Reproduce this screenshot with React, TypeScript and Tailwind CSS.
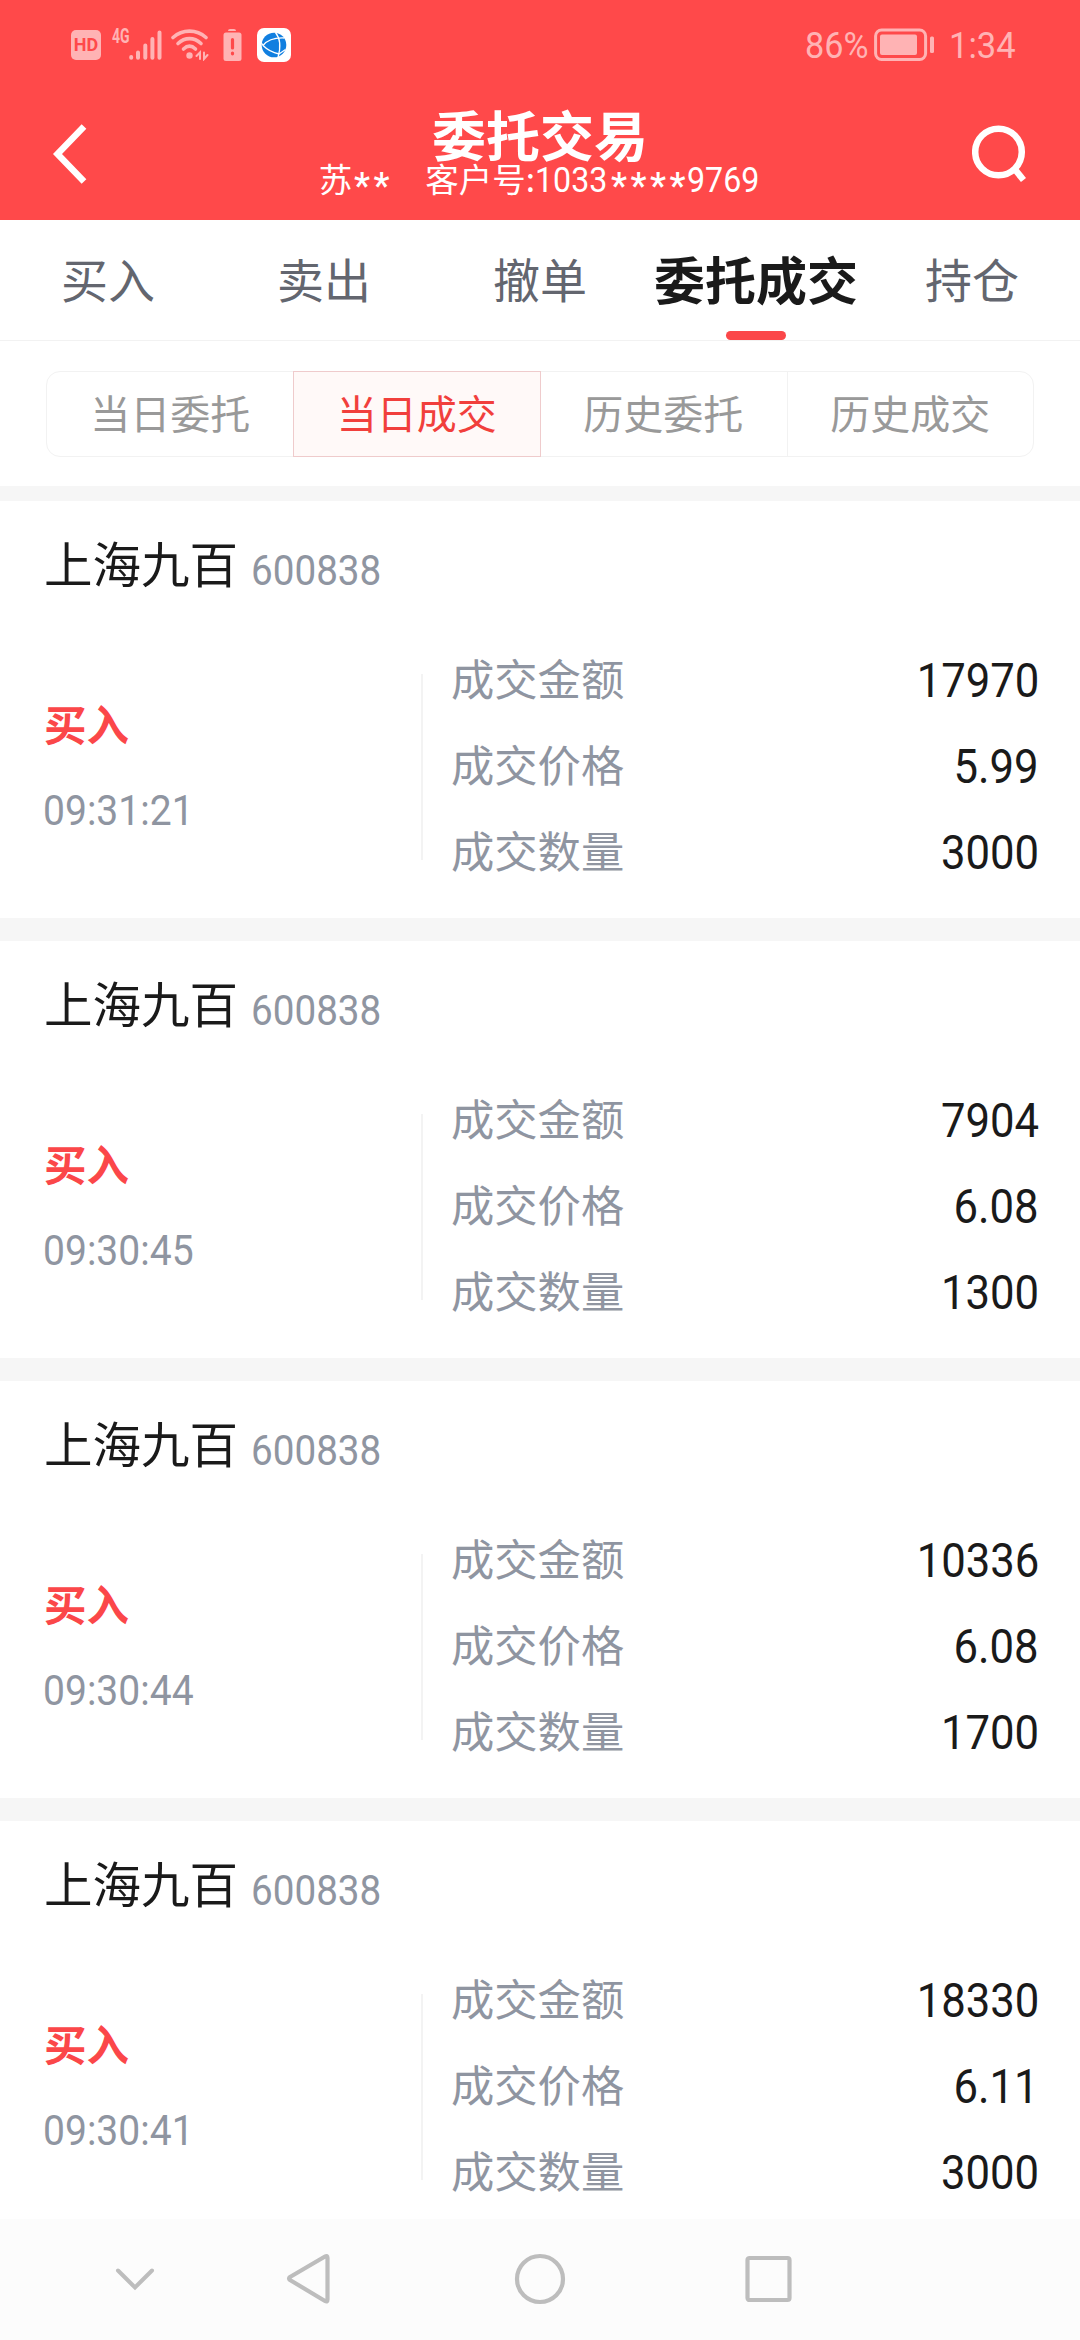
import clsx from 'clsx';

interface Deal {
  name: string;
  code: string;
  side: string;
  time: string;
  amount: string;
  price: string;
  quantity: string;
}

const TABS = ['买入', '卖出', '撤单', '委托成交', '持仓'];
const ACTIVE_TAB = '委托成交';

const FILTERS = ['当日委托', '当日成交', '历史委托', '历史成交'];
const ACTIVE_FILTER = '当日成交';

const DEALS: Deal[] = [
  { name: '上海九百', code: '600838', side: '买入', time: '09:31:21', amount: '17970', price: '5.99', quantity: '3000' },
  { name: '上海九百', code: '600838', side: '买入', time: '09:30:45', amount: '7904', price: '6.08', quantity: '1300' },
  { name: '上海九百', code: '600838', side: '买入', time: '09:30:44', amount: '10336', price: '6.08', quantity: '1700' },
  { name: '上海九百', code: '600838', side: '买入', time: '09:30:41', amount: '18330', price: '6.11', quantity: '3000' },
];

function SignalIcon() {
  return (
    <svg width="33" height="31" viewBox="0 0 33 31" stroke="currentColor" strokeWidth="4" strokeLinecap="round">
      <path d="M2.2 27v.8M9 22.500v5.300M16.300 15.500v12.300M23.400 9v18.800M30.500 2.500v25.300" />
    </svg>
  );
}

function WifiIcon() {
  return (
    <svg width="38" height="32" viewBox="0 0 38 32" fill="none" stroke="currentColor" strokeWidth="3.600" strokeLinecap="round">
      <path d="M2 8.500C11.500 0 25.500 0 35 8.500" />
      <path d="M7 14.500C14 8 23 8 30 14.500" />
      <path d="M12.500 20C16.500 16.200 20.500 16.200 24.500 20" />
      <circle cx="18.500" cy="26.500" r="3.200" fill="currentColor" stroke="none" />
      <path d="M25.500 27l3.500-3.500v6.500M33 23.500v6.500l3.500-4" strokeWidth="2" />
    </svg>
  );
}

function BatteryAlertIcon() {
  return (
    <svg width="19" height="32" viewBox="0 0 19 32">
      <path d="M5 2Q5 0 7 0h4q2 0 2 2H5z" fill="currentColor" />
      <rect x="0.500" y="3.500" width="18" height="28.500" rx="2.500" fill="currentColor" />
      <path d="M9.500 10.500v8.500M9.500 24v.8" stroke="#ff494a" strokeWidth="3.200" strokeLinecap="round" />
    </svg>
  );
}

function BrowserIcon() {
  return (
    <svg width="34" height="34" viewBox="0 0 34 34">
      <rect width="34" height="34" rx="7" fill="#fff" />
      <circle cx="17" cy="17" r="12.300" fill="#117fe0" />
      <g fill="none" stroke="#fff" strokeWidth="1.300">
        <path d="M6 17.500C10 12.500 17 9.500 27.500 10" />
        <path d="M6 17.500C10 21.500 15 24.500 22 26" />
        <path d="M18.500 4.500C23 10 24 19 21 29.500" />
        <path d="M6 17.500L4.500 15M22 26L28.500 21.500" />
      </g>
    </svg>
  );
}

function BatteryIcon() {
  return (
    <svg width="61" height="34" viewBox="0 0 61 34">
      <rect x="1.600" y="2" width="50" height="29.500" rx="6" fill="none" stroke="currentColor" strokeWidth="3" />
      <rect x="6" y="6.500" width="37" height="20.500" rx="2" fill="currentColor" />
      <rect x="56" y="8.500" width="4" height="16.500" rx="1.500" fill="currentColor" />
    </svg>
  );
}

function StatusBar() {
  return (
    <div className="flex h-[90px] items-center justify-between pl-[71px] pr-[66px] text-[#ffb3b4]">
      <div className="flex items-center">
        <span className="flex h-[30px] w-[30px] items-center justify-center rounded-[5px] bg-[#ffb3b4] font-['Roboto',sans-serif] text-[18px] font-bold leading-none text-[#ff494a]">
          HD
        </span>
        <span className="mb-[19px] ml-[11px] w-[17px] origin-left scale-x-[.7] font-['Roboto',sans-serif] text-[20px] font-bold leading-none">
          4G
        </span>
        <SignalIcon />
        <span className="ml-[9px]">
          <WifiIcon />
        </span>
        <span className="ml-[14px]">
          <BatteryAlertIcon />
        </span>
        <span className="ml-[15px]">
          <BrowserIcon />
        </span>
      </div>
      <div className="flex items-center font-['Roboto',sans-serif] text-[36px] leading-[36px]">
        <span className="w-[69px] origin-left scale-x-[.95] pt-[2px]">86%</span>
        <BatteryIcon />
        <span className="ml-[14px] w-[65px] origin-left scale-x-[.96] pt-[2px]">1:34</span>
      </div>
    </div>
  );
}

// Masked digits sit on the middle of the line rather than at cap height
function Mask({ count }: { count: number }) {
  return (
    <span className="flex pt-[14px]">
      {Array.from({ length: count }, (_, i) => (
        <span key={i} className="w-[19.5px] text-center font-['Roboto',sans-serif] text-[36px] font-medium">
          *
        </span>
      ))}
    </span>
  );
}

function TitleBar() {
  return (
    <div className="flex h-[130px] items-start justify-between pl-[52px] pr-[52px] text-white">
      <svg className="mt-[34px]" width="56" height="60" viewBox="0 0 56 60" fill="none" stroke="currentColor" strokeWidth="6.500">
        <path d="M32 2.500L5.500 30L32 57.500" />
      </svg>
      <div className="flex flex-col items-center">
        <h1 className="mt-[17px] text-[54px] font-bold leading-[54px]">委托交易</h1>
        <div className="flex h-[36px] items-center whitespace-nowrap text-[33.500px] leading-[36px]">
          <span className="pb-[2px]">苏</span>
          <Mask count={2} />
          <span className="ml-[34px] pb-[2px]">客户号:</span>
          <span className="w-[74px] origin-left scale-x-[.92] pt-[3px] font-['Roboto',sans-serif] text-[35px]">1033</span>
          <Mask count={4} />
          <span className="w-[74px] origin-left scale-x-[.92] pt-[3px] font-['Roboto',sans-serif] text-[35px]">9769</span>
        </div>
      </div>
      <svg className="mt-[34px]" width="56" height="60" viewBox="0 0 56 60" fill="none" stroke="currentColor" strokeWidth="6.500">
        <circle cx="26.500" cy="28" r="23.300" />
        <path d="M43 45.500L51.500 56" />
      </svg>
    </div>
  );
}

function TabBar() {
  return (
    <nav className="grid h-[121px] grid-cols-5 border-b border-[#f2f2f2] text-[47px] text-[#63666f]">
      {TABS.map((tab) => {
        const active = tab === ACTIVE_TAB;
        return (
          <div key={tab} className="relative flex h-[120px] items-center justify-center whitespace-nowrap pb-[3px]">
            <span className={clsx(active && 'text-[51px] font-bold text-[#1a1a1a]')}>{tab}</span>
            {active && <span className="absolute bottom-0 h-[9px] w-[60px] rounded-full bg-[#fb4749]" />}
          </div>
        );
      })}
    </nav>
  );
}

function FilterBar() {
  return (
    <div className="h-[145px] px-[46px] pt-[30px]">
      <div className="grid h-[86px] grid-cols-4 rounded-[14px] border border-[#f2f2f2] text-[40px] text-[#999]">
        {FILTERS.map((filter, i) => (
          <div
            key={filter}
            className={clsx(
              'flex items-center justify-center pb-[5px]',
              filter === ACTIVE_FILTER && '-m-px border border-[#efcbcc] bg-[#fff9f8] text-[#f13f3c]',
              i === 3 && 'border-l border-[#f2f2f2]',
            )}
          >
            {filter}
          </div>
        ))}
      </div>
    </div>
  );
}

function DealRow({ label, value }: { label: string; value: string }) {
  return (
    <div className="flex h-[86px] items-center justify-between">
      <span className="pb-[3px] text-[43.300px] leading-[83px] text-[#8f95a1]">{label}</span>
      <span className="origin-right scale-x-[.9] pt-[3px] font-['Roboto',sans-serif] text-[48.500px] leading-[81px] text-[#1a1a1a]">
        {value}
      </span>
    </div>
  );
}

function DealCard({ deal }: { deal: Deal }) {
  return (
    <article className="h-[440px] shrink-0 border-b-[23px] border-[#f6f6f6] bg-white pl-[44px] pr-[41px]">
      <header className="flex h-[135px] items-center whitespace-nowrap pb-[12px]">
        <span className="text-[48.500px] text-[#1a1a1a]">{deal.name}</span>
        <span className="ml-[13px] mt-[16px] origin-left scale-x-[.92] font-['Roboto',sans-serif] text-[42px] text-[#8f95a1]">
          {deal.code}
        </span>
      </header>
      <div className="flex">
        <div className="flex h-[260px] w-[377px] flex-col pt-[57px]">
          <span className="text-[42.500px] font-bold leading-[60px] text-[#fb4749]">{deal.side}</span>
          <span className="-ml-px mt-[28px] origin-left scale-x-[.93] font-['Roboto',sans-serif] text-[42px] leading-[60px] text-[#8f95a1]">
            {deal.time}
          </span>
        </div>
        <div className="mt-[38px] h-[186px] w-[2px] bg-[#f3f3f3]" />
        <div className="ml-[28px] flex-1">
          <DealRow label="成交金额" value={deal.amount} />
          <DealRow label="成交价格" value={deal.price} />
          <DealRow label="成交数量" value={deal.quantity} />
        </div>
      </div>
    </article>
  );
}

function SystemNav() {
  return (
    <div className="flex h-[121px] shrink-0 items-center bg-[#fcfcfc] pb-[2px] pl-[115px] text-[#bdbdbd]">
      <svg width="40" height="24" viewBox="0 0 40 24" fill="none" stroke="currentColor" strokeWidth="4" strokeLinecap="round">
        <path d="M3 3.500L20 20.500L37 3.500" />
      </svg>
      <svg className="ml-[131px]" width="46" height="52" viewBox="0 0 46 52" fill="none" stroke="currentColor" strokeWidth="4.200" strokeLinejoin="round">
        <path d="M41.500 5Q41.500 2 39 3.500L4 24Q2 25.500 4 27L39 48Q41.500 49.500 41.500 46.500Z" />
      </svg>
      <svg className="ml-[182px]" width="52" height="52" viewBox="0 0 52 52" fill="none" stroke="currentColor" strokeWidth="4.200">
        <circle cx="26" cy="26" r="23" />
      </svg>
      <svg className="ml-[178px]" width="48" height="48" viewBox="0 0 48 48" fill="none" stroke="currentColor" strokeWidth="4.200">
        <rect x="3.500" y="3" width="42" height="42" rx="2" />
      </svg>
    </div>
  );
}

export default function App() {
  return (
    <div className="flex h-[2340px] w-[1080px] flex-col overflow-hidden bg-white font-['Noto_Sans_CJK_SC',sans-serif]">
      <div className="shrink-0 bg-[#ff494a]">
        <StatusBar />
        <TitleBar />
      </div>
      <div className="shrink-0">
        <TabBar />
        <FilterBar />
        <div className="h-[15px] bg-[#f6f6f6]" />
      </div>
      <main className="flex min-h-0 flex-1 flex-col overflow-hidden">
        {DEALS.map((deal) => (
          <DealCard key={deal.time} deal={deal} />
        ))}
      </main>
      <SystemNav />
    </div>
  );
}
